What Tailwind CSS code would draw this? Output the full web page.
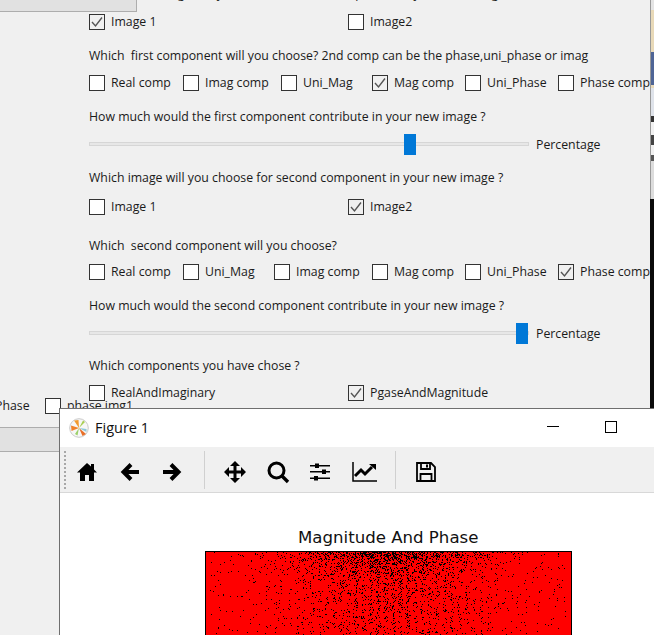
<!DOCTYPE html>
<html lang="en">
<head>
  <meta charset="UTF-8" />
  <title>Figure 1</title>
  <script src="https://cdn.jsdelivr.net/npm/@tailwindcss/browser@4"></script>
</head>
<body class="relative w-[654px] h-[635px] overflow-hidden bg-[#f0f0f0] font-['Open_Sans',sans-serif] text-[12.3px] text-[#1a1a1a]">

  <!-- Main app window -->
  <div class="absolute left-0 top-0 w-[650px] h-[635px] overflow-hidden">
    <div class="absolute left-0 top-0 w-[137px] h-[12px] bg-[#e1e1e1] border-r border-b border-[#adadad]"></div>

    <div class="pl-[89px] flex flex-col">
      <div class="h-[11px] flex items-end whitespace-pre leading-[18px]"><span class="mb-[8px]">Which  first image will you choose for first component in your new image ?</span></div>

      <div class="h-[22px] flex items-center">
        <div class="w-[259px] flex items-center gap-[6px]">
          <span class="w-[16px] h-[16px] border border-[#333] bg-[#f0f0f0] flex items-center justify-center"><svg width="14" height="14" viewBox="0 0 14 14" fill="none"><path d="M2 7l3.5 4L12 2.5" stroke="#555" stroke-width="1.4"/></svg></span>
          <span>Image 1</span>
        </div>
        <div class="flex items-center gap-[6px]">
          <span class="w-[16px] h-[16px] border border-[#333] bg-white"></span>
          <span>Image2</span>
        </div>
      </div>

      <div class="h-[18px] mt-[14px] flex items-center whitespace-pre">Which  first component will you choose? 2nd comp can be the phase,uni_phase or imag</div>

      <div class="h-[22px] mt-[7px] flex items-center whitespace-nowrap">
        <div class="w-[94px] flex items-center gap-[6px]"><span class="w-[16px] h-[16px] border border-[#333] bg-white"></span><span>Real comp</span></div>
        <div class="w-[98px] flex items-center gap-[6px]"><span class="w-[16px] h-[16px] border border-[#333] bg-white"></span><span>Imag comp</span></div>
        <div class="w-[91px] flex items-center gap-[6px]"><span class="w-[16px] h-[16px] border border-[#333] bg-white"></span><span>Uni_Mag</span></div>
        <div class="w-[93px] flex items-center gap-[6px]"><span class="w-[16px] h-[16px] border border-[#333] bg-[#f0f0f0] flex items-center justify-center"><svg width="14" height="14" viewBox="0 0 14 14" fill="none"><path d="M2 7l3.5 4L12 2.5" stroke="#555" stroke-width="1.4"/></svg></span><span>Mag comp</span></div>
        <div class="w-[93px] flex items-center gap-[6px]"><span class="w-[16px] h-[16px] border border-[#333] bg-white"></span><span>Uni_Phase</span></div>
        <div class="flex items-center gap-[6px]"><span class="w-[16px] h-[16px] border border-[#333] bg-white"></span><span>Phase comp</span></div>
      </div>

      <div class="h-[18px] mt-[14px] flex items-center">How much would the first component contribute in your new image ?</div>

      <div class="h-[22px] mt-[7px] flex items-center">
        <div class="relative w-[440px] h-[4px] bg-[#e7e7e7] border border-[#d6d6d6]">
          <span class="absolute left-[314px] -top-[9px] w-[12px] h-[21px] bg-[#0078d7]"></span>
        </div>
        <span class="ml-[7px] mt-[3px]">Percentage</span>
      </div>

      <div class="h-[18px] mt-[14px] flex items-center">Which image will you choose for second component in your new image ?</div>

      <div class="h-[22px] mt-[9px] flex items-center">
        <div class="w-[259px] flex items-center gap-[6px]">
          <span class="w-[16px] h-[16px] border border-[#333] bg-white"></span>
          <span>Image 1</span>
        </div>
        <div class="flex items-center gap-[6px]">
          <span class="w-[16px] h-[16px] border border-[#333] bg-[#f0f0f0] flex items-center justify-center"><svg width="14" height="14" viewBox="0 0 14 14" fill="none"><path d="M2 7l3.5 4L12 2.5" stroke="#555" stroke-width="1.4"/></svg></span>
          <span>Image2</span>
        </div>
      </div>

      <div class="h-[18px] mt-[19px] flex items-center whitespace-pre">Which  second component will you choose?</div>

      <div class="h-[22px] mt-[6px] flex items-center whitespace-nowrap">
        <div class="w-[94px] flex items-center gap-[6px]"><span class="w-[16px] h-[16px] border border-[#333] bg-white"></span><span>Real comp</span></div>
        <div class="w-[91px] flex items-center gap-[6px]"><span class="w-[16px] h-[16px] border border-[#333] bg-white"></span><span>Uni_Mag</span></div>
        <div class="w-[98px] flex items-center gap-[6px]"><span class="w-[16px] h-[16px] border border-[#333] bg-white"></span><span>Imag comp</span></div>
        <div class="w-[93px] flex items-center gap-[6px]"><span class="w-[16px] h-[16px] border border-[#333] bg-white"></span><span>Mag comp</span></div>
        <div class="w-[93px] flex items-center gap-[6px]"><span class="w-[16px] h-[16px] border border-[#333] bg-white"></span><span>Uni_Phase</span></div>
        <div class="flex items-center gap-[6px]"><span class="w-[16px] h-[16px] border border-[#333] bg-[#f0f0f0] flex items-center justify-center"><svg width="14" height="14" viewBox="0 0 14 14" fill="none"><path d="M2 7l3.5 4L12 2.5" stroke="#555" stroke-width="1.4"/></svg></span><span>Phase comp</span></div>
      </div>

      <div class="h-[18px] mt-[14px] flex items-center">How much would the second component contribute in your new image ?</div>

      <div class="h-[22px] mt-[7px] flex items-center">
        <div class="relative w-[440px] h-[4px] bg-[#e7e7e7] border border-[#d6d6d6]">
          <span class="absolute left-[426px] -top-[9px] w-[12px] h-[21px] bg-[#0078d7]"></span>
        </div>
        <span class="ml-[7px] mt-[2px]">Percentage</span>
      </div>

      <div class="h-[18px] mt-[13px] flex items-center">Which components you have chose ?</div>

      <div class="h-[22px] mt-[7px] flex items-center">
        <div class="w-[259px] flex items-center gap-[6px]">
          <span class="w-[16px] h-[16px] border border-[#333] bg-white"></span>
          <span>RealAndImaginary</span>
        </div>
        <div class="flex items-center gap-[6px]">
          <span class="w-[16px] h-[16px] border border-[#333] bg-[#f0f0f0] flex items-center justify-center"><svg width="14" height="14" viewBox="0 0 14 14" fill="none"><path d="M2 7l3.5 4L12 2.5" stroke="#555" stroke-width="1.4"/></svg></span>
          <span>PgaseAndMagnitude</span>
        </div>
      </div>
    </div>

    <!-- Row cut off by the figure window -->
    <div class="absolute -left-[5px] top-[398px] flex items-center whitespace-nowrap h-[16px]">
      <span class="w-[50px] mt-[1px]">Phase</span>
      <span class="w-[16px] h-[16px] border border-[#333] bg-white"></span>
      <span class="ml-[6px] mt-[1px]">phase img1</span>
    </div>

    <div class="absolute left-0 top-[427px] w-[60px] h-[25px] bg-[#e1e1e1] border-t border-b border-[#adadad]"></div>
  </div>

  <!-- Desktop showing at the right edge -->
  <div class="absolute left-[650px] top-0 w-[4px] h-[199px] flex flex-col bg-[#e8e8e8] border-l border-[#999]">
    <div class="h-[10px] bg-[#e4e4e4]"></div>
    <div class="h-[42px] bg-[#e8d9b8]"></div>
    <div class="h-[33px] bg-[#4f6596]"></div>
    <div class="h-[3px] bg-[#e8d9b8]"></div>
    <div class="h-[28px] bg-[#dfe3ea]"></div>
    <div class="h-[6px] bg-[#333]"></div>
    <div class="h-[13px] bg-[#f0f0f0]"></div>
    <div class="h-[10px] bg-[#444]"></div>
    <div class="h-[10px] bg-[#f0f0f0]"></div>
    <div class="h-[6px] bg-[#555]"></div>
    <div class="flex-1 bg-[#dcdcdc]"></div>
  </div>
  <div class="absolute left-[650px] top-[199px] w-[4px] h-[209px] bg-[#0a0a0a]"></div>

  <!-- Figure window -->
  <div class="absolute left-[59px] top-[408px] w-[600px] h-[240px] bg-white border border-[#6f6f6f] flex flex-col">
    <div class="h-[38px] flex items-center shrink-0">
      <svg class="ml-[9px]" width="20" height="20" viewBox="0 0 20 20">
        <circle cx="10" cy="10" r="9.3" fill="#f7f7f7" stroke="#c9c9c9"/>
        <path d="M10 10L5 2.500L9.500 2Z" fill="#f29a2e"/>
        <path d="M10 10L2 7.500L2.500 13Z" fill="#f0822a"/>
        <path d="M10 10L17 16L13.500 18Z" fill="#e8702a"/>
        <path d="M10 10L14 2.500L16 4Z" fill="#a9cf54"/>
        <path d="M10 10L17.500 11L17.500 14Z" fill="#8cc7d8"/>
        <path d="M10 10L8.500 17.500L6 16Z" fill="#9bd06a"/>
      </svg>
      <span class="ml-[6px] text-[14.500px] text-[#111]">Figure 1</span>
      <span class="absolute left-[487px] top-[17px] w-[12px] h-px bg-black"></span>
      <span class="absolute left-[545px] top-[12px] w-[12px] h-[12px] border border-black"></span>
    </div>

    <div class="relative h-[46px] shrink-0 bg-[#f0f0f0] border-b border-[#d8d8d8] flex items-center">
      <div class="ml-[4px] w-[3px] h-[38px] border-l-2 border-dotted border-[#a8a8a8]"></div>
      <div class="flex items-center mt-[4px]">
        <!-- home -->
        <svg class="ml-[9px]" width="22" height="22" viewBox="0 0 22 22"><path d="M11 2L1 11.500h3V20h5v-6h4v6h5v-8.500h3l-3-3V3h-3v2.500Z" fill="#000"/></svg>
        <!-- back -->
        <svg class="ml-[21px]" width="22" height="22" viewBox="0 0 22 22" fill="none"><path d="M20 11H5M12 3.500L4.500 11l7.500 7.500" stroke="#000" stroke-width="4"/></svg>
        <!-- forward -->
        <svg class="ml-[20px]" width="22" height="22" viewBox="0 0 22 22" fill="none"><path d="M2 11H17M10 3.500L17.500 11L10 18.500" stroke="#000" stroke-width="4"/></svg>
      </div>
      <span class="ml-[21px] w-px h-[38px] bg-[#d0d0d0]"></span>
      <div class="flex items-center mt-[4px]">
        <!-- move -->
        <svg class="ml-[18px]" width="24" height="24" viewBox="0 0 24 24" fill="#000"><path d="M10.500 6h3v4.500H18V7l5 5l-5 5v-3.500h-4.500V18H17l-5 5l-5-5h3.500v-4.500H6V17l-5-5l5-5v3.500h4.500V6Z"/><path d="M12 1l5 5H7Z"/></svg>
        <!-- zoom -->
        <svg class="ml-[19px]" width="24" height="24" viewBox="0 0 24 24" fill="none" stroke="#000"><circle cx="10.500" cy="10.500" r="7.500" stroke-width="3"/><path d="M15.500 15.500l6.500 6.500" stroke-width="3.400"/></svg>
        <!-- configure -->
        <svg class="ml-[19px]" width="22" height="22" viewBox="0 0 22 22" fill="#000"><path d="M1 4h20v1.500H1ZM1 10h20v1.500H1ZM1 16.500h20V18H1Z"/><path d="M6 2.500h4v4.500H6ZM13 8.500h4v4.500h-4ZM5 15h4v4.500H5Z"/></svg>
        <!-- edit axis -->
        <svg class="ml-[21px]" width="25" height="22" viewBox="0 0 25 22" fill="none" stroke="#000"><path d="M1 1v19h24" stroke-width="1.500"/><path d="M3 15l6-6l4 4l7-7" stroke-width="3"/><path d="M17 3h7v6Z" fill="#000" stroke="none"/></svg>
      </div>
      <span class="ml-[18px] w-px h-[38px] bg-[#d0d0d0]"></span>
      <!-- save -->
      <svg class="ml-[19px] mt-[4px]" width="22" height="22" viewBox="0 0 22 22" fill="none" stroke="#000" stroke-width="1.800"><path d="M2 2h14l4 4v14H2Z"/><path d="M6 2v6h9V2"/><path d="M5.500 20v-7h11v7"/><path d="M11 3.500h2v3h-2Z" fill="#000" stroke="none"/></svg>
    </div>

    <div class="flex-1 bg-white flex flex-col items-start">
      <div class="ml-[238px] mt-[35px] leading-[20px] text-[16.600px] text-[#111] font-['DejaVu_Sans',sans-serif] whitespace-nowrap">Magnitude And Phase</div>
      <canvas id="plot" width="365" height="90" class="ml-[145px] mt-[3px] border border-black block"></canvas>
    </div>
  </div>

  <script>
    // noisy magnitude plot, seeded so it is the same every run
    const c = document.getElementById("plot").getContext("2d");
    c.fillStyle = "#ff0000";
    c.fillRect(0, 0, 365, 90);
    c.fillStyle = "#000";
    let seed = 12345;
    const rnd = () => (seed = (seed * 16807) % 2147483647) / 2147483647;
    for (let y = 0; y < 90; y++) {
      for (let x = 0; x < 365; x++) {
        const dx = Math.abs(x - 182) / 182;
        if (dx > 0.98) continue;
        const across = Math.exp(-dx * dx * 5);
        const top = 0.45 * Math.exp(-y / 14);
        const band = 0.7 + 0.6 * Math.sin(x * 0.85) * Math.min(1, y / 30);
        const p = 0.012 + across * (0.15 * band + top);
        if (rnd() < p) c.fillRect(x, y, 1, 1);
      }
    }
  </script>
</body>
</html>
